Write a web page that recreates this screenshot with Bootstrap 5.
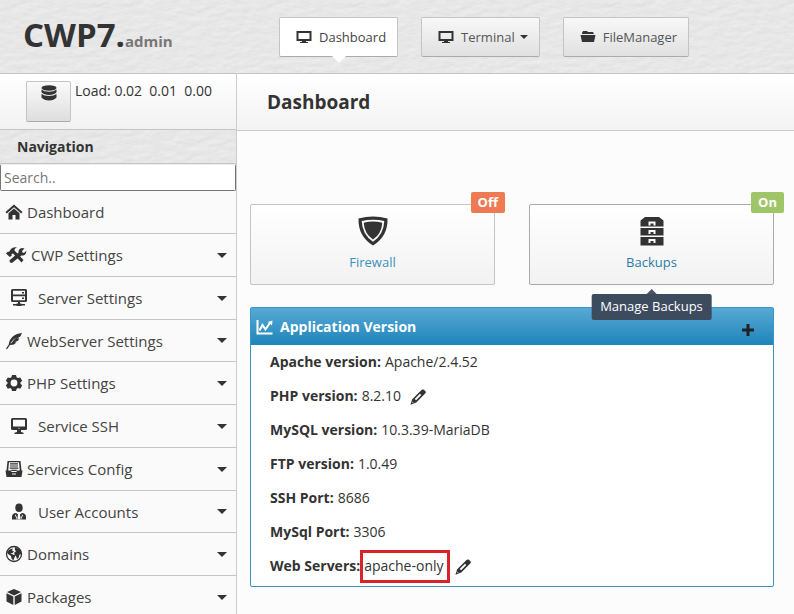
<!DOCTYPE html>
<html lang="en">
<head>
<meta charset="utf-8">
<meta name="viewport" content="width=device-width, initial-scale=1">
<title>CWP7.admin - Dashboard</title>
<link href="https://cdn.jsdelivr.net/npm/bootstrap@5.3.0/dist/css/bootstrap.min.css" rel="stylesheet">
<style>
:root{--ink:#333;--line:#c4c4c4;
--paper:url("data:image/svg+xml,%3Csvg xmlns='http://www.w3.org/2000/svg' width='256' height='256'%3E%3Cfilter id='n' x='0' y='0' width='100%25' height='100%25' color-interpolation-filters='sRGB'%3E%3CfeTurbulence type='fractalNoise' baseFrequency='.07 .16' numOctaves='4' stitchTiles='stitch' seed='4'/%3E%3CfeDiffuseLighting surfaceScale='.2' lighting-color='%23fff'%3E%3CfeDistantLight azimuth='60' elevation='65'/%3E%3C/feDiffuseLighting%3E%3C/filter%3E%3Crect width='256' height='256' filter='url(%23n)'/%3E%3C/svg%3E")}
body{font-family:"Open Sans","Noto Sans",sans-serif;font-size:14px;line-height:20px;color:var(--ink);background:#fcfcfc}
svg{fill:var(--ink);flex:none}
.topbar{background:#e8e8e8 var(--paper);border-bottom:1px solid var(--line);height:74px;padding:17px 22px 0 23px}
.brand{font-size:33px;line-height:36px;font-weight:700;color:var(--ink);width:256px;text-decoration:none}
.brand span{font-size:15px;color:#777}
.tabs{gap:23px}
.tab{height:40px;padding:0 11px 0 16px;gap:7px;border:1px solid #c4c4c4;border-bottom-color:#aaa;border-radius:2px;background:linear-gradient(#f8f8f8,#e0e0e0);color:#555;font-size:13px;position:relative}
.tab span{gap:5px}
.tab.active{background:#fff;color:#444}
.tab.active::after{content:"";position:absolute;left:50%;top:100%;margin-left:-7px;border:7px solid transparent;border-top-color:#fff;border-bottom:0}
.caret{width:0;height:0;border:4px solid transparent;border-top-color:var(--ink);border-bottom:0}
.menu .caret{border-width:5px 5px 0}
.sidebar{width:237px;border-right:1px solid #ccc;background:#fafafa}
.loadbar{height:56px;border-bottom:1px solid var(--line);background:linear-gradient(#fff,#f2f2f2);padding:7px 0 0 26px;gap:4px}
.dbbtn{width:45px;height:41px;border:1px solid #c4c4c4;border-bottom-color:#aaa;border-radius:2px;background:linear-gradient(#fafafa,#dedede);padding:3px 0 0}
.navtitle{font-size:14px;line-height:20px;font-weight:700;margin:0;padding:7px 17px 6px;background:#e6e6e6 var(--paper);border-bottom:1px solid var(--line)}
.search{display:block;width:100%;height:27px;border:1px solid #767676;border-top-color:#eee;border-radius:2px;padding:0 3px;font-size:14px;color:#555}
.search::placeholder{color:#777;opacity:1}
.menu li{border-bottom:1px solid var(--line)}
.menu a{height:42px;padding:0 9px 0 5px;gap:4px;color:#444;font-size:15px;text-decoration:none}
.menu li:nth-child(4n) a{height:41px}
.menu .inset{padding-left:10px;gap:10px}
.titlebar{height:57px;padding:0 30px;background:linear-gradient(#fff,#f3f3f3);border-bottom:1px solid #ccc}
.titlebar h1{font-size:19px;line-height:26px;font-weight:700;margin:0}
.content{padding:73px 20px 0 13px}
.tiles{gap:34px}
.tile{flex:1;position:relative;height:81px;border:1px solid #c4c4c4;border-radius:2px;background:linear-gradient(#fff,#f2f2f2);text-decoration:none;font-size:13px;color:#3b91bd;padding-top:10px;gap:5px}
.tile.hot{border-color:#aaa;color:#2a7ba6}
.flag{position:absolute;top:-13px;right:-11px;height:21px;line-height:20px;padding:0 7px;border-radius:2px;color:#fff;font-weight:700;background:#ed7a53}
.flag.on{background:#9fc569}
.tip{position:absolute;top:89px;left:50%;transform:translateX(-50%);height:26px;line-height:25px;padding:0 9px;border-radius:2px;background:#3d4b5f;color:#fff;white-space:nowrap;z-index:2}
.tip::before{content:"";position:absolute;left:50%;bottom:100%;margin-left:-5px;border:5px solid transparent;border-bottom-color:#4d5461;border-top:0}
.panel{margin-top:22px;border:1px solid #3d94bf;border-radius:2px;background:#fff}
.panel header{height:37px;padding:0 19px 0 5px;gap:7px;background:linear-gradient(#57a9d6,#1f84b9);color:#fff}
.panel h2{font-size:14px;line-height:20px;font-weight:700;margin:0}
.panel header svg{fill:#fff}
.plus{border:0;background:none;padding:6px 0 0;line-height:0}
.panel header .plus svg{fill:#222}
.facts{padding:0 19px 3px}
.facts div{height:34px;gap:4px}
.facts dt{font-weight:700}
.facts dd{margin:0}
.edit{margin-left:5px}
.boxed{border:3px solid #d8232a;height:33px;line-height:26px;padding:0 3px 0 1px}
.flush{gap:0!important}
</style>
<script src="https://cdn.jsdelivr.net/npm/bootstrap@5.3.0/dist/js/bootstrap.bundle.min.js"></script>
</head>
<body>
<svg class="d-none" aria-hidden="true">
<symbol id="screen" viewBox="0 0 16 14"><path fill-rule="evenodd" d="M.5 1h15v10H10v1h2v1H4v-1h2v-1H.5zM2.500 3v6h11V3z"/></symbol>
<symbol id="pencil" viewBox="0 0 16 16"><path fill-rule="evenodd" d="M11.500 1Q12.500 0 13.700.6L15.400 2.300q.8 1 0 2L6.300 13.400.4 15.700 2.200 10.300zM4.700 9.900l1.400 1.400 5.200-5.200-1.400-1.400zM2.700 12.500l-.5 1.400 1.400-.5z"/></symbol>
</svg>
<div class="d-flex flex-column vh-100 overflow-hidden">
<header class="topbar flex-shrink-0 d-flex align-items-start">
  <a class="brand" href="#">CWP7.<span>admin</span></a>
  <nav class="tabs d-flex" aria-label="Main">
    <a class="tab active d-flex align-items-center text-decoration-none" href="#"><svg width="16" height="14"><use href="#screen"/></svg>Dashboard</a>
    <button class="tab d-flex align-items-center" type="button"><svg width="16" height="14"><use href="#screen"/></svg><span class="d-flex align-items-center">Terminal<i class="caret"></i></span></button>
    <a class="tab d-flex align-items-center text-decoration-none" href="#"><svg width="16" height="14" viewBox="0 0 16 14"><path d="M2 3l1-2h4l1 1h5l1 2H2zM.5 5h15L14 12H2z"/></svg>FileManager</a>
  </nav>
</header>
<div class="d-flex flex-fill">
<aside class="sidebar flex-shrink-0">
  <div class="loadbar d-flex">
    <button class="dbbtn d-flex justify-content-center" type="button" aria-label="Database"><svg width="16" height="16" viewBox="0 0 16 16"><ellipse cx="8" cy="3" rx="7.500" ry="2.700"/><path d="M.5 4.500Q3 6.700 8 6.700t7.500-2.200v2.800Q13 10 8 10T.5 7.300zM.5 9Q3 11 8 11t7.500-2v3.500Q13 15.500 8 15.500T.5 12.500z"/></svg></button>
    <span>Load: 0.02 &nbsp;0.01 &nbsp;0.00</span>
  </div>
  <h2 class="navtitle">Navigation</h2>
  <input class="search" type="text" placeholder="Search.." aria-label="Search">
  <ul class="menu list-unstyled mb-0">
    <li><a class="d-flex align-items-center" href="#"><svg width="18" height="16" viewBox="0 0 18 16"><path d="M9 .5l8.500 7.500-1.300 1.500L9 3.200 1.800 9.500.5 8zM3.500 9.300L9 4.500l5.500 4.800V15.500H10.500V11h-3v4.500h-4z"/></svg>Dashboard</a></li>
    <li><a class="d-flex align-items-center" href="#"><svg width="22" height="18" viewBox="0 0 22 18"><path d="M1 7.500l2-2 1 .5 2-3Q8 .8 12 1.500 9 2.500 9.500 4.500L18.500 14 16.500 16.500 8 7.500 6.500 8l.3 1.500-2 1.500z"/><path d="M19.500 2.500l-2.500 2.500.5 1.500 1.500.5 2.300-2.300Q21.500 8 19 9.200q-1.500.5-2.600.2L7.500 16.500Q6 17.500 5 16.200q-1-1.300.2-2.400L13.600 6.500Q13.200 4 15 2.700q2-1.300 4.500-.2z"/></svg>CWP Settings<i class="caret ms-auto"></i></a></li>
    <li><a class="inset d-flex align-items-center" href="#"><svg width="18" height="18" viewBox="0 0 18 18"><path fill-rule="evenodd" d="M2.500 0h13q1.500 0 1.500 1.500v10q0 1.500-1.500 1.500h-5.500v1.500h1.500v.5H15v1.500h-3.500v.5h-5v-.5H3V15h3.500v-.5H8V13H2.500q-1.500 0-1.500-1.500v-10Q1 0 2.500 0zm.5 1.700v3.800h12V1.700zM3 7.300v4h12v-4zM12 3h2v1.400h-2zm0 5.500h2v1.400h-2z"/></svg>Server Settings<i class="caret ms-auto"></i></a></li>
    <li><a class="d-flex align-items-center" href="#"><svg width="18" height="18" viewBox="0 0 18 18"><path d="M17 1Q8 2 5 8q-1 2-1.200 4.500L1 16.500l1 .7 3-4.200q4 .3 6.500-2.500l-2-.2 3.500-1.500 1.400-2.500-2.300.1 3.200-1.800zM5.500 11Q8 7.500 12 5q-3.500 3-6 6.500z" fill-rule="evenodd"/></svg>WebServer Settings<i class="caret ms-auto"></i></a></li>
    <li><a class="d-flex align-items-center" href="#"><svg width="18" height="18" viewBox="0 0 18 18"><path fill-rule="evenodd" d="M7 1h4l.6 2.300 1.300.8 2.300-.7 2 3.400-1.700 1.500v1.500l1.700 1.600-2 3.400-2.300-.7-1.300.8L11 17H7l-.6-2.200-1.300-.8-2.300.7-2-3.400 1.700-1.600V8.200L.8 6.800l2-3.400 2.300.7 1.300-.8zM9 5.600a3.400 3.400 0 100 6.800 3.400 3.400 0 000-6.800z"/></svg>PHP Settings<i class="caret ms-auto"></i></a></li>
    <li><a class="inset d-flex align-items-center" href="#"><svg width="18" height="18" viewBox="0 0 18 18"><path fill-rule="evenodd" d="M2.500 1h13q1.500 0 1.500 1.500v9q0 1.500-1.500 1.500H11v2l2.500.7V17h-9v-1.300L7 15v-2H2.500Q1 13 1 11.500v-9Q1 1 2.500 1zM3 2.700v6.800h12V2.700zM8.500 10.700v1h1v-1z"/></svg>Service SSH<i class="caret ms-auto"></i></a></li>
    <li><a class="d-flex align-items-center" href="#"><svg width="18" height="18" viewBox="0 0 18 18"><path fill-rule="evenodd" d="M2.500 1h13l1 9.500h1L16.500 17h-15L.5 10.500h1zM4 2.200l-.8 8.300h2.600l.8 1.500h4.800l.8-1.500h2.600L14 2.200zM5 3.200h8v1.200H5zm0 2.200h8v1.200H5zm-.3 2.200h8.600v1.200H4.700zm1.500 2.200h5.600V11H6.200zM7 13.500v1h4v-1z"/></svg>Services Config<i class="caret ms-auto"></i></a></li>
    <li><a class="inset d-flex align-items-center" href="#"><svg width="18" height="18" viewBox="0 0 18 18"><ellipse cx="9" cy="4.800" rx="3.700" ry="4.300"/><path d="M6 10l2 1.200L7.500 15 9 17l1.500-2L10 11.200 12 10q4 .3 4 4v2.500H2V14q0-3.700 4-4z"/><path fill="#fafafa" d="M5.600 11.500l2.200 5h-.9L4.900 12zM12.400 11.500l-2.200 5h.9l2-4.500z"/></svg>User Accounts<i class="caret ms-auto"></i></a></li>
    <li><a class="d-flex align-items-center" href="#"><svg width="18" height="18" viewBox="0 0 18 18"><circle cx="9" cy="9" r="7.500" fill="none" stroke="#333" stroke-width="1.300"/><path d="M4.500 4.500L8 3.500 7 5.500 9 6.500 7.500 8 5.500 8.500l2.500 1 2.500 1L9.500 12.500 8.300 15.500 6.500 13.500 6 11 3 9 2 7zM10 2l5 2.500L16.500 9l-2 .5-1 3.500-1.500 1-1-3-1.500-1.200-.3-2.300L11 6.500 9.800 4.500z"/></svg>Domains<i class="caret ms-auto"></i></a></li>
    <li><a class="d-flex align-items-center" href="#"><svg width="18" height="18" viewBox="0 0 18 18"><path d="M9 1l7 3-7 3.500L2 4zM1.500 5.200l6.800 3.400V17l-6.800-3.500zM16.500 5.200L9.700 8.600V17l6.800-3.500z"/></svg>Packages<i class="caret ms-auto"></i></a></li>
  </ul>
</aside>
<main class="flex-fill">
  <div class="titlebar d-flex align-items-center"><h1>Dashboard</h1></div>
  <div class="content">
    <div class="tiles d-flex">
      <a class="tile d-flex flex-column align-items-center" href="#"><svg width="32" height="32" viewBox="0 0 32 32"><path fill-rule="evenodd" d="M16 1.500q7 .1 14.500 2Q31 21.500 16 30.500 1 21.500 1.500 3.500 9 1.600 16 1.500zm0 3.200Q10 4.800 4.700 6 5.200 19.500 16 26.800 26.800 19.500 27.300 6 22 4.800 16 4.700z"/><path d="M16 6.500q4.700.1 9.300 1.200Q24.500 19 16 24.400 7.500 19 6.700 7.700 11.300 6.600 16 6.500z"/></svg>Firewall<span class="flag">Off</span></a>
      <a class="tile hot d-flex flex-column align-items-center" href="#"><svg width="32" height="32" viewBox="0 0 32 32"><path fill-rule="evenodd" d="M9 2h14l4.500 3.500V11.500h-23V5.500zM4.500 13h23v7.500h-23zM4.500 22h23v8.500h-23zM12.500 6.500v4h2v-2h3v2h2v-4zM12.500 15v4h2v-2h3v2h2v-4zM12.500 24v4h2v-2h3v2h2v-4z"/></svg>Backups<span class="flag on">On</span><span class="tip" role="tooltip">Manage Backups</span></a>
    </div>
    <section class="panel">
      <header class="d-flex align-items-center"><svg width="17" height="16" viewBox="0 0 17 16"><path d="M.5 1h2v12.500h14v2H.5z"/><path fill="none" stroke="#fff" stroke-width="2" d="M3.500 11.500L6.500 6l3 4.500L14.500 3"/><path d="M12 3l4.500-1.500L16 6.500z"/></svg><h2>Application Version</h2>
      <button class="plus ms-auto" type="button" aria-label="Expand"><svg width="12" height="12" viewBox="0 0 12 12"><path d="M4.500 0h3v4.500H12v3H7.500V12h-3V7.500H0v-3h4.500z"/></svg></button></header>
      <dl class="facts mb-0">
        <div class="d-flex align-items-center"><dt>Apache version:</dt><dd>Apache/2.4.52</dd></div>
        <div class="d-flex align-items-center"><dt>PHP version:</dt><dd>8.2.10</dd><dd><a class="edit" href="#" aria-label="Edit PHP version"><svg width="16" height="16"><use href="#pencil"/></svg></a></dd></div>
        <div class="d-flex align-items-center"><dt>MySQL version:</dt><dd>10.3.39-MariaDB</dd></div>
        <div class="d-flex align-items-center"><dt>FTP version:</dt><dd>1.0.49</dd></div>
        <div class="d-flex align-items-center"><dt>SSH Port:</dt><dd>8686</dd></div>
        <div class="d-flex align-items-center"><dt>MySql Port:</dt><dd>3306</dd></div>
        <div class="flush d-flex align-items-center"><dt>Web Servers:</dt><dd class="boxed">apache-only</dd><dd><a class="edit" href="#" aria-label="Edit web servers"><svg width="16" height="16"><use href="#pencil"/></svg></a></dd></div>
      </dl>
    </section>
  </div>
</main>
</div>
</div>
</body>
</html>
